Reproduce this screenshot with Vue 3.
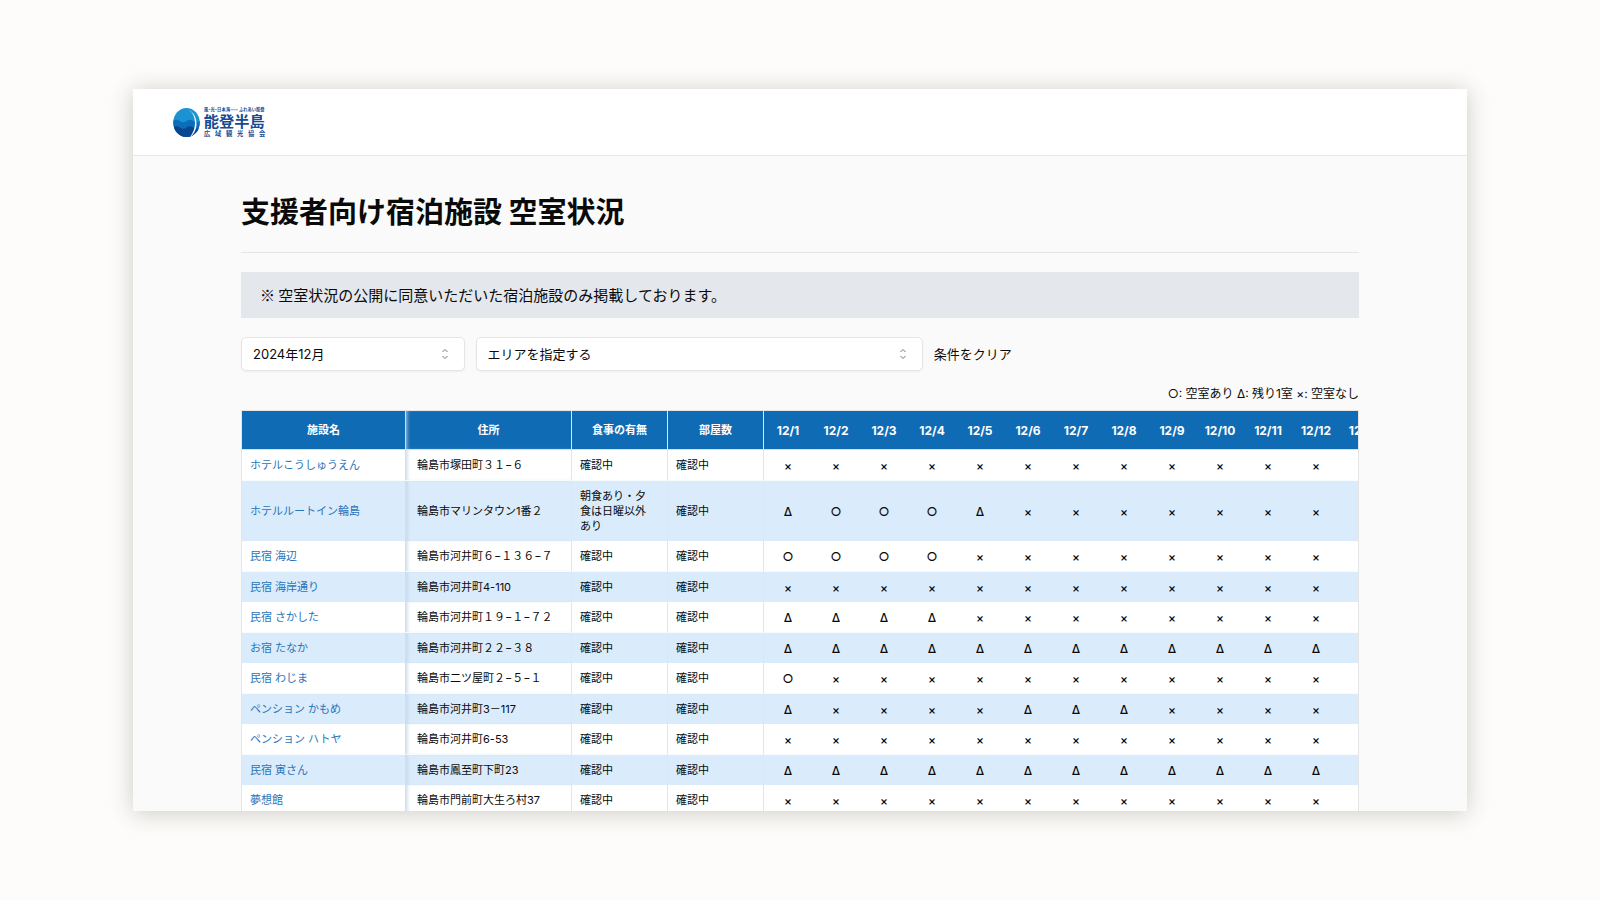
<script setup>
import { ref } from 'vue'

const month = ref('2024-12')
const area = ref('')

const dates = Array.from({ length: 13 }, (_, i) => `12/${i + 1}`)

const facilities = [
  { name: 'ホテルこうしゅうえん', address: '輪島市塚田町３１−６', meal: '確認中', days: '×××××××××××××' },
  { name: 'ホテルルートイン輪島', address: '輪島市マリンタウン1番２', meal: '朝食あり・夕食は日曜以外あり', days: 'Δ○○○Δ××××××××' },
  { name: '民宿 海辺', address: '輪島市河井町６−１３６−７', meal: '確認中', days: '○○○○×××××××××' },
  { name: '民宿 海岸通り', address: '輪島市河井町4-110', meal: '確認中', days: '×××××××××××××' },
  { name: '民宿 さかした', address: '輪島市河井町１９−１−７２', meal: '確認中', days: 'ΔΔΔΔ×××××××××' },
  { name: 'お宿 たなか', address: '輪島市河井町２２−３８', meal: '確認中', days: 'ΔΔΔΔΔΔΔΔΔΔΔΔΔ' },
  { name: '民宿 わじま', address: '輪島市二ツ屋町２−５−１', meal: '確認中', days: '○××××××××××××' },
  { name: 'ペンション かもめ', address: '輪島市河井町3－117', meal: '確認中', days: 'Δ××××ΔΔΔ×××××' },
  { name: 'ペンション ハトヤ', address: '輪島市河井町6-53', meal: '確認中', days: '×××××××××××××' },
  { name: '民宿 寅さん', address: '輪島市鳳至町下町23', meal: '確認中', days: 'ΔΔΔΔΔΔΔΔΔΔΔΔΔ' },
  { name: '夢想館', address: '輪島市門前町大生ろ村37', meal: '確認中', days: '×××××××××××××' },
]

function clearFilters() {
  month.value = '2024-12'
  area.value = ''
}
</script>

<template>
  <div class="stage">
    <div class="window">
      <header class="site-header">
        <a class="logo" href="#" aria-label="能登半島広域観光協会">
          <svg viewBox="0 0 380 128" aria-hidden="true">
            <defs>
              <clipPath id="egg"><ellipse cx="54" cy="66" rx="53" ry="58" /></clipPath>
            </defs>
            <g clip-path="url(#egg)">
              <rect width="108" height="128" fill="#1b93d3" />
              <path d="M0 60q13-10 27 0t27 0 27 0 27 0v68H0z" fill="#0c6db9" />
              <path d="M0 86q13-10 27 0t27 0 27 0 27 0v42H0z" fill="#064590" />
              <path d="M62 14C96 36 96 94 66 126C106 98 102 36 62 14z" fill="#fff" />
            </g>
            <g fill="#174b92" class="logo-text">
              <text x="124 137 150 163 176 194 212" y="21" font-size="17">風・光・日本海</text>
              <path d="M232 15h28" stroke="#174b92" stroke-width="2" />
              <text x="264" y="21" font-size="17">ふれあい能登</text>
              <text x="123" y="84" font-size="61">能登半島</text>
              <text x="124 168 212 256 300 344" y="121" font-size="25">広域観光協会</text>
            </g>
          </svg>
        </a>
      </header>

      <main class="content">
        <h1>支援者向け宿泊施設 空室状況</h1>
        <p class="notice">※ 空室状況の公開に同意いただいた宿泊施設のみ掲載しております。</p>

        <div class="filters">
          <div class="select month">
            <select v-model="month" aria-label="年月">
              <option value="2024-12">2024年12月</option>
            </select>
            <svg viewBox="0 0 8 12" aria-hidden="true"><path d="M1.500 4L4 1.500 6.500 4M1.500 8L4 10.500 6.500 8" /></svg>
          </div>
          <div class="select area">
            <select v-model="area" aria-label="エリア">
              <option value="">エリアを指定する</option>
            </select>
            <svg viewBox="0 0 8 12" aria-hidden="true"><path d="M1.500 4L4 1.500 6.500 4M1.500 8L4 10.500 6.500 8" /></svg>
          </div>
          <button type="button" class="clear" @click="clearFilters">条件をクリア</button>
        </div>

        <p class="legend">○: 空室あり Δ: 残り1室 ×: 空室なし</p>

        <div class="table-wrap">
          <table>
            <colgroup>
              <col class="c-name" />
              <col class="c-address" />
              <col class="c-info" />
              <col class="c-info" />
              <col v-for="d in dates" :key="d" class="c-day" />
            </colgroup>
            <thead>
              <tr>
                <th scope="col" class="name">施設名</th>
                <th scope="col" class="ruled address">住所</th>
                <th scope="col" class="ruled">食事の有無</th>
                <th scope="col" class="ruled">部屋数</th>
                <th v-for="d in dates" :key="d" scope="col" class="day">{{ d }}</th>
              </tr>
            </thead>
            <tbody>
              <tr v-for="f in facilities" :key="f.name">
                <td class="name"><a href="#">{{ f.name }}</a></td>
                <td class="ruled address">{{ f.address }}</td>
                <td class="ruled meal">{{ f.meal }}</td>
                <td class="ruled">確認中</td>
                <td v-for="(s, i) in f.days" :key="i" class="day">{{ s }}</td>
              </tr>
            </tbody>
          </table>
        </div>
      </main>
    </div>
  </div>
</template>

<style>
body {
  margin: 0;
  background: #fdfcfa;
}
</style>

<style scoped>
.stage {
  box-sizing: border-box;
  height: 100vh;
  padding: 89px 133px;
  background: #fdfcfa;
  font-family: Inter, "Noto Sans CJK JP", sans-serif;
  color: #0a0a0a;
}

.window {
  height: 100%;
  overflow: hidden;
  background: #fafafa;
  box-shadow: 0 2px 22px rgba(60, 50, 40, 0.24);
}

.site-header {
  display: flex;
  align-items: center;
  height: 66px;
  padding: 0 40px;
  background: #fff;
  border-bottom: 1px solid #e8e8e8;
}

.logo {
  display: block;
  width: 95px;
  height: 32px;
}

.logo svg {
  display: block;
  width: 100%;
  height: 100%;
}

.logo-text {
  font-family: "Noto Sans CJK JP", sans-serif;
  font-weight: 700;
}

.content {
  padding: 0 108px;
}

h1 {
  margin: 0;
  padding: 32px 0 20px;
  border-bottom: 1px solid #e5e5e5;
  font-family: "Noto Sans CJK JP", sans-serif;
  font-size: 29px;
  line-height: 44px;
  font-weight: 700;
}

.notice {
  margin: 19px 0;
  padding: 10px 19px 11px;
  background: #e4e7ec;
  font-family: "Noto Sans CJK JP", sans-serif;
  font-size: 15px;
  line-height: 25px;
}

.filters {
  display: flex;
  align-items: center;
  gap: 11px;
}

.select {
  position: relative;
}

.month {
  width: 20%;
}

.area {
  width: 40%;
}

.select select {
  display: block;
  box-sizing: border-box;
  width: 100%;
  height: 34px;
  padding: 0 32px 0 11px;
  border: 1px solid #e5e5e5;
  border-radius: 5px;
  background: #fff;
  box-shadow: 0 1px 2px rgba(0, 0, 0, 0.05);
  appearance: none;
  font: 400 13px/20px Inter, "Noto Sans CJK JP", sans-serif;
  color: #0a0a0a;
}

.select svg {
  position: absolute;
  top: 11px;
  right: 16px;
  width: 8px;
  height: 12px;
  fill: none;
  stroke: #777;
  stroke-width: 1;
  pointer-events: none;
}

.clear {
  padding: 0;
  border: 0;
  background: none;
  font: 400 13px/20px Inter, "Noto Sans CJK JP", sans-serif;
  color: #0a0a0a;
}

.legend {
  margin: 15px 0 8px;
  font-size: 12px;
  line-height: 16px;
  text-align: right;
}

.table-wrap {
  overflow: hidden;
  border: 1px solid #e5e5e5;
}

table {
  width: 1146px;
  table-layout: fixed;
  border-collapse: separate;
  border-spacing: 0;
  font-size: 11px;
  line-height: 15px;
}

.c-name {
  width: 164px;
}

.c-address {
  width: 166px;
}

.c-info {
  width: 96px;
}

.c-day {
  width: 48px;
}

th {
  height: 38px;
  padding: 0;
  background: #106bb5;
  border-bottom: 1px solid #cfe1f1;
  color: #fff;
  font-weight: 700;
}

td {
  padding: 8px 8px 7px;
  background: #fff;
}

tbody tr:nth-child(odd) td {
  border-bottom: 1px solid #f7fbfe;
}

tbody tr:nth-child(even) td {
  background: #daebfb;
}

.ruled {
  border-right: 1px solid #e5e5e5;
}

.name {
  border-right: 1px solid #d3dee8;
}

.address {
  box-shadow: inset 3px 0 3px -1px rgba(190, 210, 228, 0.6);
}

td.address {
  padding-left: 11px;
}

td.meal {
  padding-right: 16px;
}

td.day,
th.day {
  padding-right: 0;
  padding-left: 0;
  font-size: 12px;
  text-align: center;
}

td.day {
  font-weight: 500;
}

td a {
  color: #2a74b9;
  text-decoration: none;
}
</style>
